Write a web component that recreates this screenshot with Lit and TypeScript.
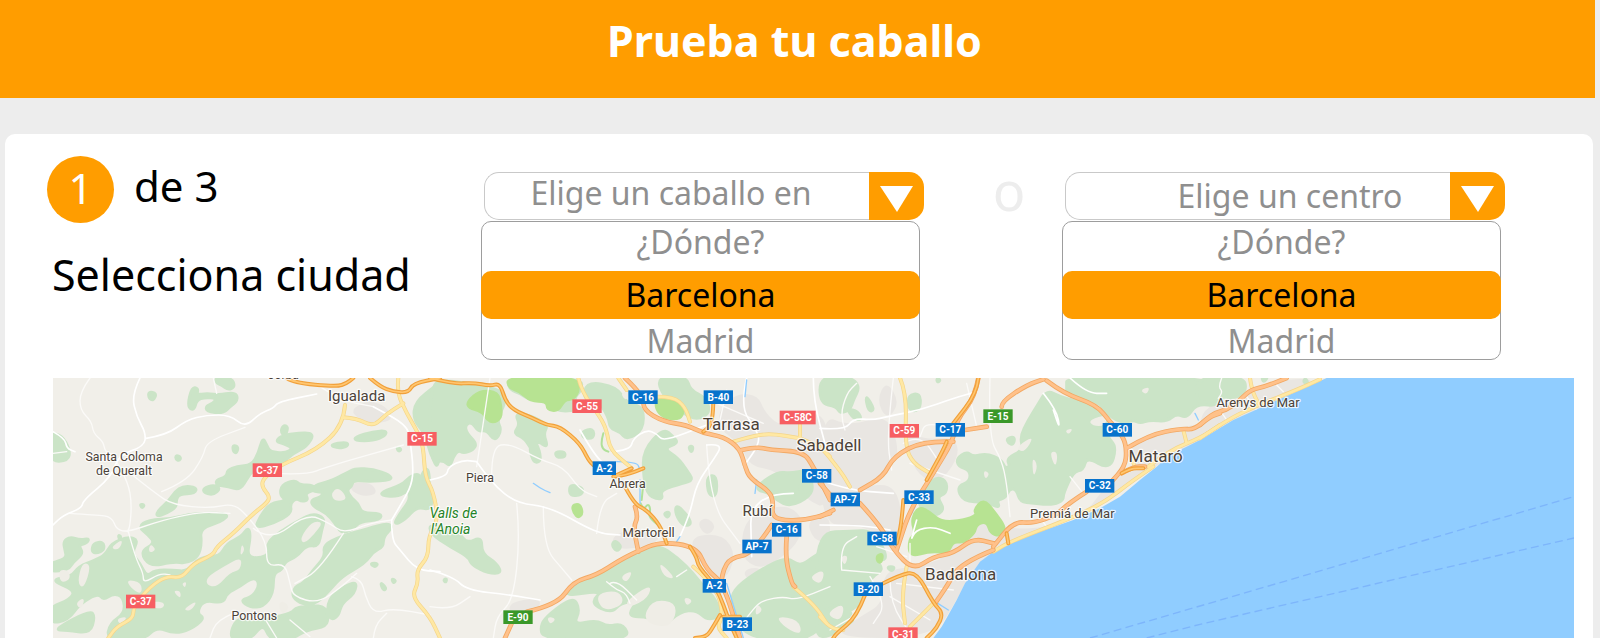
import { LitElement, html, css, svg } from "lit";
import { customElement, property, state } from "lit/decorators.js";

type Place = [number, number, string, string];

/* Map drawing units are thirds of a pixel. Each sheet of the map has its own horizontal origin. */
const SHEETS = [0, 1170, 2340, 3480];

const URBAN: [number, string][] = [
  [0, "M930 120L985 90 1040 110 1060 150 1010 160 960 150Z M930 340L990 335 1015 370 975 380 935 365Z"],
  [1, "M865 120L920 70 985 75 1005 130 1060 175 1130 120 1200 150 1200 420 1130 390 1040 300 960 290 930 220 870 180Z M945 440L1060 400 1120 440 1110 510 1060 560 990 600 930 560Z M1200 430L1200 520 1150 510 1130 450Z M800 460L830 440 860 470 830 500Z M540 500L620 470 700 500 650 530 560 540Z M770 500L880 490 920 560 880 640 820 600Z M230 700L330 680 330 720 250 740Z M940 600L990 590 1000 625 950 630Z"],
  [2, "M0 130L90 170 200 130 240 240 210 300 120 350 230 340 250 480 210 520 120 460 0 470Z M250 180L320 210 400 200 420 250 370 330 310 330 270 270Z M190 600L300 590 440 540 540 510 520 545 480 575 435 640 410 690 340 804 30 804 120 740 190 700Z M430 420L560 480 700 470 800 430 860 340 940 300 1000 290 840 415 560 520 440 560 330 580Z M930 210L1180 150 1200 180 1000 300 930 300Z M200 30L240 100 200 150 170 90Z"],
  [3, "M0 130L60 90 150 70 230 30 370 24 200 110 0 210Z"],
];

const FOREST: [number, string][] = [
  [0, "M30 190L65 195 90 240 85 272 30 275Z M325 65L350 70 340 92 327 85Z M455 52L475 55 470 75 500 70 540 75 575 68 592 75 590 95 570 110 550 130 500 125 498 108 520 100 530 85 495 82 470 90 462 122 442 110Z M525 24L575 24 585 50 565 60 545 45 530 40Z M668 202L680 225 690 245 735 250 760 235 730 220 708 215 720 200 760 190 825 188 800 230 760 250 725 280 700 300 640 300 625 320 600 360 565 350 530 345 528 330 560 320 562 300 590 290 635 285 655 250Z M730 165L745 170 735 200 722 185Z M578 225L595 230 590 250 580 245Z M408 255L423 262 418 272 407 268Z M868 225L920 215 925 228 895 235Z M945 200L1000 185 1040 182 1035 198 1000 212 945 212Z M300 402L314 405 306 415Z M405 365L430 348 470 352 465 370 418 372 408 390 410 410 380 430 348 440 355 420 385 395Z M490 355L520 345 542 355 520 375 492 368Z"],
  [0, "M725 345L765 330 780 345 820 345 825 360 795 370 805 390 785 395 770 385 750 400 755 430 700 460 645 475 660 440 690 400 740 392 720 375Z M865 335L920 310 945 295 1000 298 1050 315 1055 330 985 335 940 330 935 350 920 360 935 385 955 400 965 430 1025 430 1020 450 960 455 935 480 905 490 885 460 860 430 820 410 812 390 845 380 850 365 815 365 825 345Z M1025 365L1085 345 1110 320 1135 310 1145 330 1170 345 1180 380 1170 420 1130 410 1095 450 1060 465 1080 430 1110 390 1105 360 1075 380 1025 378Z M1040 370L1070 365 1055 380Z"],
  [0, "M295 470L325 450 400 445 460 430 570 430 545 455 480 475 485 520 475 560 440 580 400 575 330 590 300 545 345 520 325 495Z M160 520L190 515 193 540 170 550 155 545Z M30 580L80 565 75 540 70 515 90 500 120 510 148 505 140 520 115 525 130 550 100 575 85 600 30 605Z M30 630L95 620 115 590 165 570 195 555 215 520 265 500 295 510 275 550 300 580 320 620 345 600 400 600 440 605 480 560 540 560 560 520 605 500 625 470 632 500 620 560 660 565 690 550 680 520 720 485 780 450 820 430 855 445 845 480 835 530 800 525 770 560 735 575 725 600 700 610 700 670 670 710 630 712 600 690 640 680 660 640 640 620 600 650 560 670 550 700 490 690 470 730 495 745 450 780 400 790 350 770 310 810 200 810 210 760 255 730 250 680 220 670 190 690 175 670 120 700 85 750 30 760 30 710 90 690 105 660Z"],
  [0, "M765 650L790 640 820 600 855 560 850 525 900 500 985 475 1040 460 1060 470 1030 500 1030 530 1000 545 975 580 905 620 870 660 830 700 790 705 755 680Z M950 630L945 670 905 700 895 740 870 750 860 710 880 670Z M770 710L850 705 865 735 860 770 800 780 750 810 690 810 670 760 630 810 565 810 590 740 640 760 690 745 755 730Z M990 580L1015 580 1005 592Z M1020 635L1040 655 1030 662Z M1125 95L1190 45 1200 40 1200 310 1170 250 1155 190 1120 150Z M40 780L150 720 165 740 150 790 80 780Z M1145 310L1165 290 1170 350 1140 350Z M235 495L243 500 238 508Z M1055 625L1068 632 1060 640Z M1070 230L1085 238 1075 245Z"],
  [1, "M0 40L50 30 160 50 210 60 230 90 200 150 215 180 195 215 170 180 145 185 125 155 105 165 110 190 140 220 130 240 100 250 85 240 70 260 60 290 40 270 0 280Z M230 24L455 24 455 60 430 85 450 120 380 125 350 90 300 90 270 70 240 60Z M255 130L300 135 355 165 340 190 355 235 320 210 310 250 285 205 250 190 270 165Z M300 225L320 215 335 270 315 280 302 255Z M375 245L405 245 405 262 380 262Z M455 185L490 175 492 205 460 205Z M470 35L560 50 590 100 640 110 640 180 590 210 570 185 540 175 535 140 500 85 460 90Z M680 20L770 20 780 60 830 85 840 130 800 150 760 130 700 80Z M430 345L460 355 455 375 420 378 418 350Z M0 460L90 490 110 520 155 500 155 550 200 580 215 610 175 610 125 585 115 560 60 530 0 490Z M830 320L860 315 860 380 835 375Z M990 340L1045 305 1080 310 1130 300 1150 345 1140 380 1080 410 1040 390 1020 370 980 360Z"],
  [1, "M640 240L700 175 730 200 745 220 700 235 745 265 770 300 790 330 760 340 690 360 700 390 655 380 640 320Z M590 570L680 520 745 565 790 610 820 650 860 690 870 740 830 750 800 720 750 725 700 770 660 740 590 740 625 690 570 700 545 730 480 700 520 660 400 680 430 640 500 625Z M360 730L430 680 450 720 430 765 500 750 530 770 580 760 600 810 340 810 330 765Z M920 650L990 600 1070 560 1110 590 1150 560 1200 530 1200 810 940 810 900 690Z M545 525L555 510 575 530 560 545Z M1100 350L1140 340 1130 375Z M740 400L790 460 760 470 735 430Z M700 430L720 425 715 445Z M40 630L50 625 48 638Z M775 230L790 228 785 250Z"],
  [2, "M0 20L90 20 120 50 100 90 90 120 60 130 50 110 0 100Z M80 115L115 125 125 150 100 145Z M265 75L300 70 302 110 285 125 265 115Z M135 70L165 120 145 125Z M740 20L1200 20 1200 110 1130 100 1100 145 1070 130 1040 155 990 150 960 160 940 150 910 160 870 140 840 100 800 90 770 80 740 70 740 50Z M680 60L720 80 760 90 810 105 850 140 870 170 860 200 890 230 870 300 800 260 790 300 760 305 730 370 730 390 700 405 640 400 600 395 590 360 570 355 555 385 530 390 540 415 495 395 430 395 410 350 450 335 450 300 415 290 410 265 440 245 460 260 500 250 545 270 555 295 570 290 560 265 610 240 600 200 625 150 650 110Z M560 205L585 200 580 225 565 220Z"],
  [2, "M285 400L340 320 380 330 380 370 350 380 375 420 340 440Z M-10 485L100 485 150 480 190 530 200 570 170 570 190 600 155 620 140 660 100 730 -10 720Z M-10 720L30 700 100 725 80 745 110 750 -10 820Z M200 590L225 590 215 605Z M350 25L362 30 352 38Z"],
  [3, "M-10 20L130 20 140 60 110 85 60 80 30 95 -10 100Z M185 20L205 20 190 38Z M315 24L325 38 310 38Z"],
];

const CLEARING: [number, string][] = [
  [0, "M55 600L85 600 92 628 62 640Z M210 535L250 505 238 540Z M500 622L550 590 605 560 602 600 570 608 530 652 500 645Z M398 662L422 662 422 688Z M336 693L375 698 368 716 338 714Z M872 372L895 350 925 388 885 395Z M780 505L815 455 850 456 822 494 792 522Z M260 628L305 638 305 675 270 652Z M428 718L474 690 452 724Z M126 578L154 584 132 656 112 640Z M330 520L350 540 325 550Z M605 520L615 540 600 560Z M425 640L440 635 435 655Z M105 700L135 680 125 720Z M230 745L265 740 240 765Z M725 690L750 710 730 735 715 710Z"],
  [1, "M585 695L665 640 655 684 600 712Z M685 572L740 628 700 620Z M495 672L565 660 585 702 520 726Z M665 688L745 698 724 776 636 756Z M1036 738L1106 748 1116 796 1066 774Z M1135 622L1185 596 1174 646Z M570 620L610 600 590 640Z M760 680L790 690 770 710Z M980 700L1000 720 975 740Z M570 70L600 60 590 95Z M190 90L200 110 180 120Z M350 740L380 745 360 765Z"],
  [2, "M636 260L654 285 640 326Z M688 245L714 245 707 296Z M806 150L866 132 854 168 818 168Z M586 232L645 195 612 250Z M16 732L74 696 64 756Z M735 180L760 175 745 195Z M490 300L510 310 495 330Z M960 60L990 50 980 75Z M60 560L85 555 75 590Z"],
];

const PARK: [number, string][] = [
  [1, "M230 20L440 20 450 60 430 90 405 90 385 125 350 120 350 95 300 95 270 65 235 55Z M110 95L150 60 205 65 215 110 215 145 190 160 170 150 155 125 115 115Z M680 85L740 90 765 120 750 150 700 145 675 115Z M425 405L450 400 460 430 445 445 430 430Z"],
  [2, "M280 430L300 410 330 425 365 455 430 450 470 435 460 420 490 385 525 425 560 475 540 500 510 490 500 455 470 465 465 490 430 520 400 515 385 550 330 545 268 562 265 510 285 490 275 460Z M170 555L190 550 185 580 170 575Z"],
];

const MINOR: [number, string][] = [
  [0, "M300 24L275 75 290 140 318 190 312 230 235 255 215 320 130 390 125 415 70 435 39 465 M318 205L380 195 440 150 500 135 570 135 615 172 660 130 700 115 715 95 830 72 M39 185L75 205 80 235 105 245 M1055 450L1055 510 1080 540 1130 600 1200 605 M1055 450L1085 400 1115 345 1120 290 1110 210 1100 165 1000 110"],
  [1, "M0 330L50 320 55 290 100 270 140 275 M140 275L185 340 260 400 360 410 500 490 570 495 M0 600L70 620 110 660 240 675 330 690 M450 180L490 250 530 290 M545 245L600 240 610 205 650 180 680 190 700 215 830 165 M830 225L880 220 850 270 800 340 780 430 750 500 M1150 24L1150 90 1190 240 M1090 370L960 370 965 560 M950 24L930 110 980 180 990 220 940 290"],
  [2, "M0 175L75 180 100 145 160 150 200 140 300 120 400 85 470 65 M670 70L710 120 720 180 700 120 M750 24L800 70 860 70 M0 465L120 465 210 480 M290 450L270 520 285 480 340 470 390 490 M0 330L80 360 220 370"],
];

const LANES: [number, string][] = [
  [0, "M39 250L80 245 M150 24L120 65 120 120 155 155 160 190 190 215 195 245 225 265 265 340 275 400 270 470 262 485 M252 295L345 370 400 405 510 415 580 400 625 440 680 515 680 590 735 580 750 640 760 680 835 700 905 650 950 610 M90 430L170 435 215 440 230 480 265 485 340 460 M365 365L440 335 490 260 500 215 615 172 M265 485L285 560 310 610 310 640 360 610 390 615 M640 475L690 515 800 430 870 460 910 490 990 460 1055 450 M910 490L840 600 765 640 M700 310L800 315 860 290 1090 225 M935 620L965 630 975 675 1000 730 1060 715 1170 735 M1000 804L1005 765 1040 730 M580 730L530 750 510 804 M680 755L710 804 M750 750L810 800 M340 460L460 425 570 430 M520 24L530 70 M840 50L900 90 1000 110"],
  [1, "M180 24L140 290 M185 320L185 230 240 220 330 270 400 290 450 360 500 380 M260 400L270 500 250 690 200 740 190 804 M340 410L340 530 400 600 425 630 M830 225L840 400 930 520 M540 640L560 630 620 690 M740 620L770 600 M930 770L970 715 1000 690 1060 680 1100 690 1200 650 M0 710L60 720 120 680 M600 700L590 670 560 660 530 635 M500 490L510 400 560 370 M860 100L1000 160 M890 60L870 150"],
  [2, "M75 180L60 140 80 70 110 40 M510 24L505 200 545 270 560 340 570 440 M220 24L200 200 215 300 M750 320L790 370 M270 520L270 580 M65 600L60 530 110 500 M65 600L180 610 M170 530L260 560 M150 620L200 700 160 760 M210 630L210 700 280 804 M30 780L100 740 M270 280L420 330 M250 220L300 190 360 280 M410 180L320 150 300 200 M440 40L470 170 M330 750L210 680 M400 660L230 640 M680 470L650 430"],
  [3, "M65 24L55 50 68 65 55 85 M0 160L60 120 80 150 M140 80L170 120 M230 45L250 65"],
];

const YELLOW: [number, string][] = [
  [0, "M915 105L910 165 830 240 720 285 670 325 665 350 690 380 680 400 640 430 580 490 530 530 520 555 460 580 425 625 380 618 330 650 280 710 280 745 230 770 205 804 M910 142L950 145 1000 170 1035 135 1090 100 M1075 24L1070 65 1100 130 1135 190 1150 230 1155 320 1180 365 1195 450 1165 500 1165 560 1130 600 1135 640 1115 680 1170 740 1200 804"],
  [1, "M445 24L455 65 510 140 530 180 540 240 600 290 M565 24L590 60 M680 80L730 80 765 110 780 155 M910 215L960 200 1020 190 1110 205 M1110 150L1110 210 M1110 205L1170 230 M1180 240L1200 260 M790 590L860 650 880 740 860 770 890 804 M1090 650L1150 700 1190 760"],
  [2, "M10 240L60 300 90 350 M240 24L260 70 255 230 280 280 330 310 M260 590L245 670 255 760 M270 770L340 700 M1000 290L940 330 850 400 740 450 570 515 520 545 M985 290L1050 240 1140 205 1200 165 M1090 180L1100 220 M0 740L30 775 70 780 M920 230L945 290"],
  [3, "M0 205L80 150 175 105 290 60 360 28 M150 24L155 60 175 100"],
];

const MOTORWAY: [number, string][] = [
  [1, "M585 24L640 75 640 120 700 155 770 165 820 190 880 200 930 235 945 290 960 325 1020 365 1030 400 1025 430 1045 450 1120 452 1200 430 M935 240L980 230 1020 240 1120 245 1150 290 1200 390 M290 725L380 705 430 635 500 615 570 570 620 545 690 515 800 530 830 600 880 640 930 804 M1025 465L970 550 900 565 880 600 875 630 M1070 500L1065 560 1085 640 1095 650 M245 760L225 804 M615 410L625 440 610 470 625 545"],
  [2, "M475 24L465 80 410 150 400 210 340 310 270 420 240 510 230 540 M400 215L310 212 220 260 190 320 120 360 M0 440L40 420 M0 340L40 385 M435 180L500 170 M545 110L545 95 620 45 670 28 M680 32L730 70 830 105 870 155 910 200 920 240 915 290 870 340 M920 235L985 195 1085 175 1120 180 1170 140 1200 130 M800 365L745 400 710 435 640 460 580 455 520 530 M120 400L180 465 220 540 280 600 340 560 400 550 460 505 520 520 M520 540L420 580 380 650 345 700 M905 310L940 290 975 290"],
  [3, "M0 165L35 130 80 120 115 95 150 60 195 50 260 24"],
];

const TRUNK: [number, string][] = [
  [0, "M740 24L760 38 890 50 920 40 940 24 M990 24L1020 50 1060 65 1105 68 1120 40 1200 24"],
  [1, "M0 24L70 42 130 38 180 48 210 40 225 90 250 120 310 145 350 165 390 170 450 220 475 270 490 285 M550 320L590 315 640 295 M560 315L605 295 M580 340L610 400 650 420 690 465 710 520 M780 530L800 560 805 590 860 650 900 760 920 804 M850 85L850 160 820 185 M870 735L850 770 830 800 795 804 M880 740L930 740"],
  [2, "M475 24L470 70 400 160 M380 215L370 240 320 330 M250 390L245 460 230 520 M190 640L240 615 290 605 340 700 370 730 350 775 320 804 M135 675L110 740 50 790 40 804 M560 490L565 520 M905 310L930 295 970 295"],
];

const WATER: [number, string][] = [
  [1, "M560 275L620 275 630 300 M630 330L630 400 M310 340L330 355 360 368 M750 500L740 515 M950 30L945 80 M980 330L975 370 M890 640L940 804"],
  [2, "M285 410L265 450 M345 695L385 720 M1125 130L1135 150"],
];

const RIVERBANK: [number, string][] = [
  [1, "M520 190L513 215 518 238 535 245 M632 400L640 420 655 400 662 420 655 440 690 470 M640 340L635 390"],
];

const TOWNS: [number, number, number, number, string, string][] = [
  [0, 730, 27, 36, "Jorba", "town"],
  [0, 950, 94, 45, "Igualada", "town"],
  [0, 252, 272, 37, "Santa Coloma", "town"],
  [0, 252, 316, 37, "de Queralt", "town"],
  [0, 643, 751, 37, "Pontons", "town"],
  [1, 150, 336, 37, "Piera", "town"],
  [1, 593, 353, 37, "Abrera", "town"],
  [1, 656, 501, 39, "Martorell", "town"],
  [1, 904, 180, 51, "Tarrasa", "town"],
  [1, 982, 438, 45, "Rubí", "town"],
  [1, 70, 443, 42, "Valls de", "valley"],
  [1, 62, 493, 42, "l'Anoia", "valley"],
  [2, 27, 244, 51, "Sabadell", "town"],
  [2, 1007, 277, 51, "Mataró", "town"],
  [2, 422, 630, 51, "Badalona", "town"],
  [2, 757, 444, 39, "Premiá de Mar", "town"],
  [3, 174, 111, 39, "Arenys de Mar", "town"],
];

const SHIELDS: [number, ...Place][] = [
  [0, 1146, 206, "C-15", "red"], [0, 682, 300, "C-37", "red"], [0, 302, 694, "C-37", "red"],
  [1, 471, 108, "C-55", "red"], [1, 639, 81, "C-16", "blue"], [1, 865, 81, "B-40", "blue"],
  [1, 1103, 142, "C-58C", "red"], [1, 523, 294, "A-2", "blue"], [1, 1160, 317, "C-58", "blue"],
  [1, 1070, 479, "C-16", "blue"], [1, 981, 529, "AP-7", "blue"], [1, 853, 647, "A-2", "blue"],
  [1, 922, 762, "B-23", "blue"], [1, 264, 741, "E-90", "green"],
  [2, 253, 182, "C-59", "red"], [2, 391, 179, "C-17", "blue"], [2, 534, 138, "E-15", "green"],
  [2, 892, 179, "C-60", "blue"], [2, 839, 347, "C-32", "blue"], [2, 297, 381, "C-33", "blue"],
  [2, 76, 388, "AP-7", "blue"], [2, 186, 505, "C-58", "blue"], [2, 145, 657, "B-20", "blue"],
  [2, 249, 792, "C-31", "red"],
];

/* Turns straight-sided outlines into rounded ones: corners become curves between side midpoints. */
function rounded(d: string): string {
  return d
    .split("M")
    .filter((part) => part.trim())
    .map((part) => {
      const closed = part.includes("Z");
      const n = (part.match(/-?\d+/g) ?? []).map(Number);
      const pts: [number, number][] = [];
      for (let i = 0; i + 1 < n.length; i += 2) pts.push([n[i], n[i + 1]]);
      const mid = (a: [number, number], b: [number, number]) => `${(a[0] + b[0]) / 2} ${(a[1] + b[1]) / 2}`;
      const last = pts.length - 1;
      if (closed) {
        const curves = pts.map((p, i) => `Q${p[0]} ${p[1]} ${mid(p, pts[(i + 1) % pts.length])}`);
        return `M${mid(pts[last], pts[0])}${curves.join("")}Z`;
      }
      const curves = pts.slice(1, last).map((p, i) => `Q${p[0]} ${p[1]} ${mid(p, pts[i + 2])}`);
      return `M${pts[0][0]} ${pts[0][1]}${curves.join("")}L${pts[last][0]} ${pts[last][1]}`;
    })
    .join("");
}

@customElement("coast-map")
class CoastMap extends LitElement {
  static styles = css`
    :host { display: block; min-width: 0; overflow: hidden; }
    .map { display: block; width: 100%; height: auto; background: #f1efe9; }
    .urban { fill: #e9e6e2; }
    .forest { fill: #cbe4c7; stroke: #cbe4c7; stroke-width: 9; stroke-linejoin: round; }
    .clearing { fill: #efede6; }
    .park { fill: #b7e392; stroke: #b7e392; stroke-width: 6; stroke-linejoin: round; }
    .sea { fill: #90cdff; }
    .line { fill: none; stroke-linejoin: round; stroke-linecap: round; }
    .minor { stroke: #ffffff; stroke-width: 5; }
    .lane { stroke: #fbfaf8; stroke-width: 4; }
    .water { stroke: #90cdff; stroke-width: 4; }
    .bank { stroke: #b0e09a; stroke-width: 6; }
    .yellow-edge { stroke: #f4d58b; stroke-width: 12; }
    .yellow { stroke: #ffe8a3; stroke-width: 8; }
    .motorway-edge { stroke: #f2a863; stroke-width: 14; }
    .motorway { stroke: #ffc18a; stroke-width: 9; }
    .trunk-edge { stroke: #f1a03a; stroke-width: 12; }
    .trunk { stroke: #ffc670; stroke-width: 5; }
    .ferry { fill: none; stroke: #7db5fb; stroke-width: 4; stroke-dasharray: 24 13; }
    text { font-family: Roboto, "Liberation Sans", sans-serif; text-anchor: middle; }
    .town, .valley { paint-order: stroke; stroke: #ffffff; stroke-opacity: 0.8; stroke-width: 7; stroke-linejoin: round; }
    .town { fill: #4b4238; }
    .valley { fill: #1f8427; font-style: italic; }
    .shield { fill: #ffffff; font-size: 30px; font-weight: 700; }
    .red { fill: #f75e62; }
    .blue { fill: #0873cc; }
    .green { fill: #3a9829; }
  `;

  private layer(paths: [number, string][], name: string, soft = false) {
    return paths.map(
      ([sheet, d]) => svg`<path class=${name} transform="translate(${SHEETS[sheet]} 0)" d=${soft ? rounded(d) : d}></path>`
    );
  }

  private shield([sheet, x, y, label, tone]: [number, ...Place]) {
    const width = label.length === 3 ? 70 : label.length === 5 ? 108 : 88;
    const left = SHEETS[sheet] + x;
    return svg`
      <rect class=${tone} x=${left - width / 2} y=${y - 20} width=${width} height="41"></rect>
      <text class="shield" x=${left} y=${y + 11}>${label}</text>`;
  }

  render() {
    return html`
      <svg class="map" viewBox="39 24 4563 780" role="img" aria-label="Mapa de Barcelona">
        ${this.layer(URBAN, "urban", true)}
        ${this.layer(FOREST, "forest", true)}
        ${this.layer(CLEARING, "clearing", true)}
        ${this.layer(PARK, "park", true)}
        ${this.layer(LANES, "line lane", true)}
        ${this.layer(MINOR, "line minor", true)}
        ${this.layer([[2, "M1520 24L1440 60 1340 105 1240 150 1140 210 1100 230 1050 255 1010 290 960 330 900 380 840 415 760 450 660 485 570 520 520 545 480 575 435 640 410 690 385 735 365 770 340 804H2262V24Z"]], "sea")}
        ${this.layer([[2, "M810 804L1140 708 2262 380"], [2, "M980 804L1140 763 2262 504"]], "ferry")}
        ${this.layer(RIVERBANK, "line bank", true)}
        ${this.layer(WATER, "line water", true)}
        ${this.layer(YELLOW, "line yellow-edge", true)}
        ${this.layer(YELLOW, "line yellow", true)}
        ${this.layer(MOTORWAY, "line motorway-edge", true)}
        ${this.layer(MOTORWAY, "line motorway", true)}
        ${this.layer(TRUNK, "line trunk-edge", true)}
        ${this.layer(TRUNK, "line trunk", true)}
        ${TOWNS.map(([sheet, x, y, size, label, kind]) => svg`<text class=${kind} x=${SHEETS[sheet] + x} y=${y} font-size=${size}>${label}</text>`)}
        ${SHIELDS.map((s) => this.shield(s))}
      </svg>`;
  }
}

@customElement("city-picker")
class CityPicker extends LitElement {
  @property() label = "";
  @property() align = "start";
  @state() city = "Barcelona";
  @state() open = true;

  static styles = css`
    :host { display: block; min-width: 0; }
    .field { display: flex; height: 48px; margin-left: 3px; box-sizing: border-box; }
    select {
      appearance: none; flex: 1; min-width: 0; box-sizing: border-box; margin: 0;
      border: 1px solid #c9c9c9; border-right: 0; border-radius: 15px 0 0 15px; background: #ffffff;
      color: #8f8f8f; font: inherit; line-height: 40px; text-align: center; text-align-last: center;
    }
    .start { padding: 0 12px 6px 0; }
    .end { padding: 0 0 0 64px; }
    .arrow {
      width: 55px; padding: 6px 0 0; border: 0; border-radius: 0 15px 15px 0; background: #ff9d00;
      display: grid; place-items: center; cursor: pointer;
    }
    .list {
      list-style: none; margin: 1px 4px 0 0; padding: 0; border: 1px solid #9d9d9d; border-radius: 10px;
      background: #ffffff;
    }
    .option {
      display: block; width: 100%; height: 40px; padding: 0; border: 0; border-radius: 10px; background: none;
      box-sizing: border-box; color: #8f8f8f; font: inherit; line-height: 36px; text-align: center; cursor: pointer;
    }
    .first { padding-bottom: 9px; }
    .last .option { padding-top: 4px; }
    .chosen { margin: 0 -1px; }
    .chosen .option { height: 48px; background: #ff9d00; color: #000000; }
  `;

  render() {
    const names = ["¿Dónde?", "Barcelona", "Madrid"];
    return html`
      <div class="field">
        <select class=${this.align} aria-label=${this.label}><option>${this.label}</option></select>
        <button class="arrow" aria-label="Abrir lista" @click=${() => (this.open = !this.open)}>
          <svg width="33" height="26" viewBox="0 0 33 26" aria-hidden="true"><path d="M0 0H33L17 26Z" fill="#ffffff"></path></svg>
        </button>
      </div>
      ${this.open
        ? html`<ul class="list">
            ${names.map(
              (name, i) => html`<li class="${i === 0 ? "first" : i === names.length - 1 ? "last" : ""} ${name === this.city ? "chosen" : ""}">
                <button class="option" @click=${() => (this.city = name)}>${name}</button>
              </li>`
            )}
          </ul>`
        : ""}`;
  }
}

@customElement("app-root")
class AppRoot extends LitElement {
  static styles = css`
    :host {
      display: block; min-height: 100vh; overflow: hidden; background: #ededed;
      font-family: "Noto Sans", "Open Sans", sans-serif; color: #000000;
    }
    .bar { height: 98px; margin-right: 5px; padding-right: 6px; background: #ff9d00; color: #ffffff; text-align: center; }
    .title { margin: 0; padding-top: 9px; font-size: 43px; line-height: 64px; font-weight: 700; }
    .card { margin: 36px 7px 0 5px; padding-top: 20px; border-radius: 10px 10px 0 0; background: #ffffff; }
    .top { display: grid; grid-template-columns: 434fr 443fr 138fr 443fr; padding: 0 88px 0 42px; }
    .step { display: flex; align-items: center; gap: 20px; font-size: 42px; line-height: 64px; }
    .number { width: 67px; padding-bottom: 3px; border-radius: 50%; background: #ff9d00; color: #ffffff; text-align: center; }
    .total { padding-bottom: 6px; }
    .heading { margin: 19px 0 0 5px; font-size: 43px; line-height: 64px; font-weight: 400; white-space: nowrap; }
    .picker { margin-top: 18px; font-size: 32px; }
    .or { margin-top: 6px; padding-left: 32px; font-size: 54px; line-height: 60px; text-align: center; color: #ededed; }
    .city-map { margin: 18px 19px 0 48px; }
  `;

  render() {
    return html`
      <header class="bar"><h1 class="title">Prueba tu caballo</h1></header>
      <main class="card">
        <div class="top">
          <section>
            <div class="step"><span class="number">1</span><span class="total">de 3</span></div>
            <h2 class="heading">Selecciona ciudad</h2>
          </section>
          <city-picker class="picker" label="Elige un caballo en" align="start"></city-picker>
          <div class="or">o</div>
          <city-picker class="picker" label="Elige un centro" align="end"></city-picker>
        </div>
        <coast-map class="city-map"></coast-map>
      </main>`;
  }
}
